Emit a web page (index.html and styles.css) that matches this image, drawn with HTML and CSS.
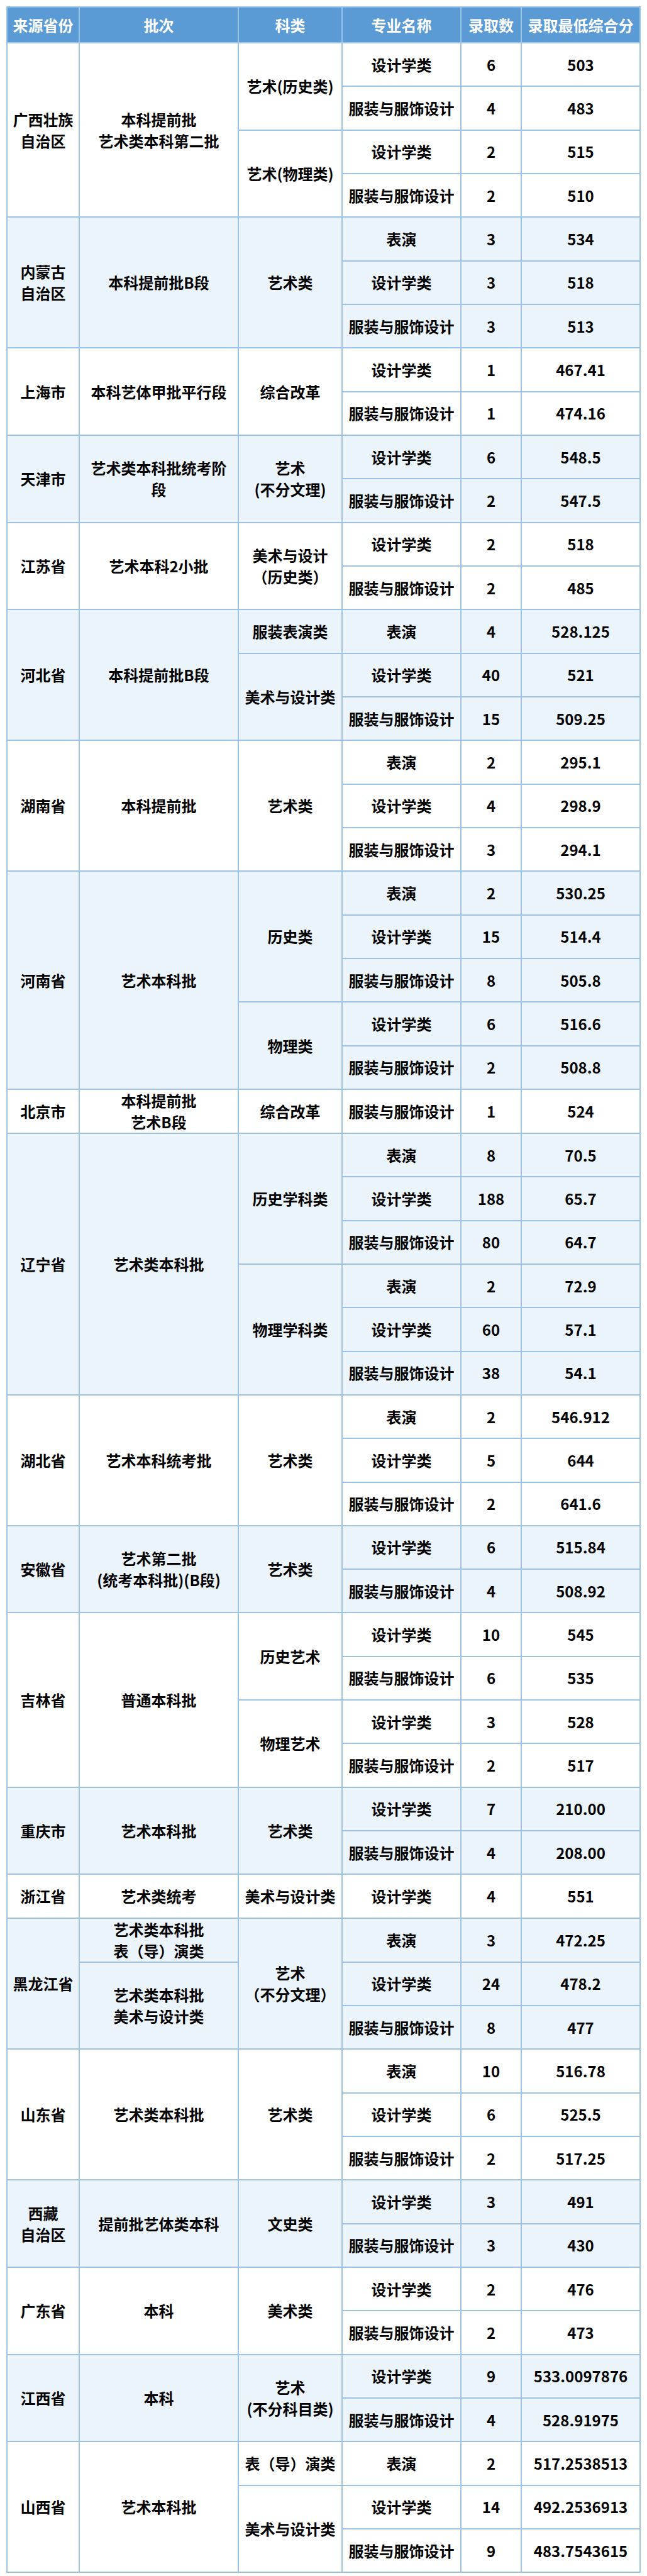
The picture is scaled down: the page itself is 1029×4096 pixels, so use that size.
FILE: index.html
```html
<!DOCTYPE html>
<html lang="zh-CN">
<head>
<meta charset="utf-8">
<title>录取分数</title>
<link rel="stylesheet" href="styles.css">
</head>
<body>
<table class="score-table">
  <colgroup>
    <col class="c-prov"><col class="c-batch"><col class="c-cat"><col class="c-major"><col class="c-num"><col class="c-score">
  </colgroup>
  <thead>
    <tr class="head-row">
      <th>来源省份</th><th>批次</th><th>科类</th><th>专业名称</th><th>录取数</th><th>录取最低综合分</th>
    </tr>
  </thead>

  <tbody class="grp">
    <tr><td rowspan="4">广西壮族<br>自治区</td><td rowspan="4">本科提前批<br>艺术类本科第二批</td><td rowspan="2">艺术(历史类)</td><td>设计学类</td><td>6</td><td>503</td></tr>
    <tr><td>服装与服饰设计</td><td>4</td><td>483</td></tr>
    <tr><td rowspan="2">艺术(物理类)</td><td>设计学类</td><td>2</td><td>515</td></tr>
    <tr><td>服装与服饰设计</td><td>2</td><td>510</td></tr>
  </tbody>

  <tbody class="grp alt">
    <tr><td rowspan="3">内蒙古<br>自治区</td><td rowspan="3">本科提前批B段</td><td rowspan="3">艺术类</td><td>表演</td><td>3</td><td>534</td></tr>
    <tr><td>设计学类</td><td>3</td><td>518</td></tr>
    <tr><td>服装与服饰设计</td><td>3</td><td>513</td></tr>
  </tbody>

  <tbody class="grp">
    <tr><td rowspan="2">上海市</td><td rowspan="2">本科艺体甲批平行段</td><td rowspan="2">综合改革</td><td>设计学类</td><td>1</td><td>467.41</td></tr>
    <tr><td>服装与服饰设计</td><td>1</td><td>474.16</td></tr>
  </tbody>

  <tbody class="grp alt">
    <tr><td rowspan="2">天津市</td><td rowspan="2">艺术类本科批统考阶<br>段</td><td rowspan="2">艺术<br>(不分文理)</td><td>设计学类</td><td>6</td><td>548.5</td></tr>
    <tr><td>服装与服饰设计</td><td>2</td><td>547.5</td></tr>
  </tbody>

  <tbody class="grp">
    <tr><td rowspan="2">江苏省</td><td rowspan="2">艺术本科2小批</td><td rowspan="2">美术与设计<br>（历史类）</td><td>设计学类</td><td>2</td><td>518</td></tr>
    <tr><td>服装与服饰设计</td><td>2</td><td>485</td></tr>
  </tbody>

  <tbody class="grp alt">
    <tr><td rowspan="3">河北省</td><td rowspan="3">本科提前批B段</td><td>服装表演类</td><td>表演</td><td>4</td><td>528.125</td></tr>
    <tr><td rowspan="2">美术与设计类</td><td>设计学类</td><td>40</td><td>521</td></tr>
    <tr><td>服装与服饰设计</td><td>15</td><td>509.25</td></tr>
  </tbody>

  <tbody class="grp">
    <tr><td rowspan="3">湖南省</td><td rowspan="3">本科提前批</td><td rowspan="3">艺术类</td><td>表演</td><td>2</td><td>295.1</td></tr>
    <tr><td>设计学类</td><td>4</td><td>298.9</td></tr>
    <tr><td>服装与服饰设计</td><td>3</td><td>294.1</td></tr>
  </tbody>

  <tbody class="grp alt">
    <tr><td rowspan="5">河南省</td><td rowspan="5">艺术本科批</td><td rowspan="3">历史类</td><td>表演</td><td>2</td><td>530.25</td></tr>
    <tr><td>设计学类</td><td>15</td><td>514.4</td></tr>
    <tr><td>服装与服饰设计</td><td>8</td><td>505.8</td></tr>
    <tr><td rowspan="2">物理类</td><td>设计学类</td><td>6</td><td>516.6</td></tr>
    <tr><td>服装与服饰设计</td><td>2</td><td>508.8</td></tr>
  </tbody>

  <tbody class="grp">
    <tr><td>北京市</td><td>本科提前批<br>艺术B段</td><td>综合改革</td><td>服装与服饰设计</td><td>1</td><td>524</td></tr>
  </tbody>

  <tbody class="grp alt">
    <tr><td rowspan="6">辽宁省</td><td rowspan="6">艺术类本科批</td><td rowspan="3">历史学科类</td><td>表演</td><td>8</td><td>70.5</td></tr>
    <tr><td>设计学类</td><td>188</td><td>65.7</td></tr>
    <tr><td>服装与服饰设计</td><td>80</td><td>64.7</td></tr>
    <tr><td rowspan="3">物理学科类</td><td>表演</td><td>2</td><td>72.9</td></tr>
    <tr><td>设计学类</td><td>60</td><td>57.1</td></tr>
    <tr><td>服装与服饰设计</td><td>38</td><td>54.1</td></tr>
  </tbody>

  <tbody class="grp">
    <tr><td rowspan="3">湖北省</td><td rowspan="3">艺术本科统考批</td><td rowspan="3">艺术类</td><td>表演</td><td>2</td><td>546.912</td></tr>
    <tr><td>设计学类</td><td>5</td><td>644</td></tr>
    <tr><td>服装与服饰设计</td><td>2</td><td>641.6</td></tr>
  </tbody>

  <tbody class="grp alt">
    <tr><td rowspan="2">安徽省</td><td rowspan="2">艺术第二批<br>(统考本科批)(B段)</td><td rowspan="2">艺术类</td><td>设计学类</td><td>6</td><td>515.84</td></tr>
    <tr><td>服装与服饰设计</td><td>4</td><td>508.92</td></tr>
  </tbody>

  <tbody class="grp">
    <tr><td rowspan="4">吉林省</td><td rowspan="4">普通本科批</td><td rowspan="2">历史艺术</td><td>设计学类</td><td>10</td><td>545</td></tr>
    <tr><td>服装与服饰设计</td><td>6</td><td>535</td></tr>
    <tr><td rowspan="2">物理艺术</td><td>设计学类</td><td>3</td><td>528</td></tr>
    <tr><td>服装与服饰设计</td><td>2</td><td>517</td></tr>
  </tbody>

  <tbody class="grp alt">
    <tr><td rowspan="2">重庆市</td><td rowspan="2">艺术本科批</td><td rowspan="2">艺术类</td><td>设计学类</td><td>7</td><td>210.00</td></tr>
    <tr><td>服装与服饰设计</td><td>4</td><td>208.00</td></tr>
  </tbody>

  <tbody class="grp">
    <tr><td>浙江省</td><td>艺术类统考</td><td>美术与设计类</td><td>设计学类</td><td>4</td><td>551</td></tr>
  </tbody>

  <tbody class="grp alt">
    <tr><td rowspan="3">黑龙江省</td><td>艺术类本科批<br>表（导）演类</td><td rowspan="3">艺术<br>（不分文理）</td><td>表演</td><td>3</td><td>472.25</td></tr>
    <tr><td rowspan="2">艺术类本科批<br>美术与设计类</td><td>设计学类</td><td>24</td><td>478.2</td></tr>
    <tr><td>服装与服饰设计</td><td>8</td><td>477</td></tr>
  </tbody>

  <tbody class="grp">
    <tr><td rowspan="3">山东省</td><td rowspan="3">艺术类本科批</td><td rowspan="3">艺术类</td><td>表演</td><td>10</td><td>516.78</td></tr>
    <tr><td>设计学类</td><td>6</td><td>525.5</td></tr>
    <tr><td>服装与服饰设计</td><td>2</td><td>517.25</td></tr>
  </tbody>

  <tbody class="grp alt">
    <tr><td rowspan="2">西藏<br>自治区</td><td rowspan="2">提前批艺体类本科</td><td rowspan="2">文史类</td><td>设计学类</td><td>3</td><td>491</td></tr>
    <tr><td>服装与服饰设计</td><td>3</td><td>430</td></tr>
  </tbody>

  <tbody class="grp">
    <tr><td rowspan="2">广东省</td><td rowspan="2">本科</td><td rowspan="2">美术类</td><td>设计学类</td><td>2</td><td>476</td></tr>
    <tr><td>服装与服饰设计</td><td>2</td><td>473</td></tr>
  </tbody>

  <tbody class="grp alt">
    <tr><td rowspan="2">江西省</td><td rowspan="2">本科</td><td rowspan="2">艺术<br>(不分科目类)</td><td>设计学类</td><td>9</td><td>533.0097876</td></tr>
    <tr><td>服装与服饰设计</td><td>4</td><td>528.91975</td></tr>
  </tbody>

  <tbody class="grp">
    <tr><td rowspan="3">山西省</td><td rowspan="3">艺术本科批</td><td>表（导）演类</td><td>表演</td><td>2</td><td>517.2538513</td></tr>
    <tr><td rowspan="2">美术与设计类</td><td>设计学类</td><td>14</td><td>492.2536913</td></tr>
    <tr><td>服装与服饰设计</td><td>9</td><td>483.7543615</td></tr>
  </tbody>
</table>
</body>
</html>
```

FILE: styles.css
```css
html, body {
  margin: 0;
  padding: 0;
  background: #ffffff;
}

body {
  font-family: "Microsoft YaHei", "Noto Sans CJK SC", "Noto Sans", sans-serif;
  font-weight: 700;
  color: #000000;
}

.score-table {
  border-collapse: collapse;
  table-layout: fixed;
  width: 1007px;
  margin: 10px 0 0 10px;
  font-size: 24px;
  line-height: 34px;
}

.c-prov { width: 115px; }
.c-batch { width: 253px; }
.c-cat { width: 165px; }
.c-major { width: 189px; }
.c-num { width: 96px; }
.c-score { width: 189px; }

.score-table th,
.score-table td {
  border: 2px solid #9dc3e6;
  text-align: center;
  vertical-align: middle;
  padding: 0 4px;
  white-space: nowrap;
}

.head-row {
  height: 57px;
  background: #5b9bd5;
  color: #ffffff;
}

.head-row th {
  font-weight: 700;
}

.grp tr {
  height: 69.33px;
}

.grp {
  background: #ffffff;
}

.grp.alt {
  background: #ebf3fb;
}
```
